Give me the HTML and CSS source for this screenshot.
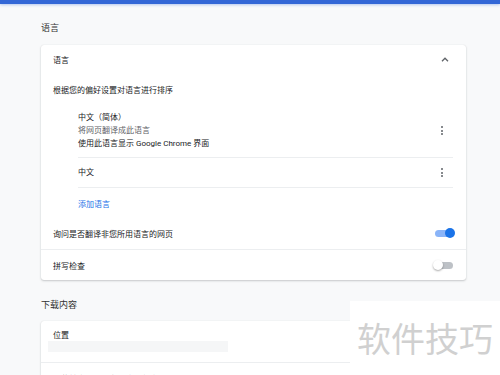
FILE: index.html
```html
<!DOCTYPE html>
<html lang="zh-CN">
<head>
<meta charset="utf-8">
<link rel="stylesheet" href="styles.css">
</head>
<body>
<div class="topbar"></div>
<main class="page">
  <h2 class="section-title">语言</h2>
  <section class="card">
    <div class="row row-head">
      <span>语言</span>
      <svg class="chev" width="8" height="5" viewBox="0 0 8 5"><path d="M1 4.2 L4 1.2 L7 4.2" fill="none" stroke="#5f6368" stroke-width="1.3"/></svg>
    </div>
    <div class="row row-sub">根据您的偏好设置对语言进行排序</div>
    <div class="lang-list">
      <div class="lang-item lang-multi">
        <div class="lang-text">
          <div class="l1">中文（简体）</div>
          <div class="l2">将网页翻译成此语言</div>
          <div class="l1">使用此语言显示 Google Chrome 界面</div>
        </div>
        <span class="dots"><i></i><i></i><i></i></span>
      </div>
      <div class="lang-item lang-single">
        <div class="lang-text"><div class="l1">中文</div></div>
        <span class="dots"><i></i><i></i><i></i></span>
      </div>
      <div class="lang-add">添加语言</div>
    </div>
    <div class="row row-toggle">
      <span>询问是否翻译非您所用语言的网页</span>
      <span class="toggle on"><span class="knob"></span></span>
    </div>
    <div class="row row-toggle bordered">
      <span>拼写检查</span>
      <span class="toggle off"><span class="knob"></span></span>
    </div>
  </section>
  <h2 class="section-title second">下载内容</h2>
  <section class="card">
    <div class="row row-loc">
      <span>位置</span>
      <div class="placeholder"></div>
    </div>
    <div class="row row-ask bordered">下载前询问每个文件的保存位置</div>
  </section>
</main>
<div class="watermark">软件技巧</div>
</body>
</html>
```
FILE: styles.css
```css
html, body {
  margin: 0;
  padding: 0;
}
*, *::before, *::after {
  box-sizing: border-box;
}
body {
  background: #f8f9fa;
  font-family: Roboto, "Noto Sans CJK SC", sans-serif;
  color: #202124;
  font-size: 8px;
  width: 500px;
  height: 375px;
  overflow: hidden;
  position: relative;
}
.topbar {
  height: 4px;
  background: #3367d6;
  box-shadow: 0 1px 3px rgba(51,103,214,0.35);
}
.page {
  display: flex;
  flex-direction: column;
  padding-left: 41px;
  width: 466px;
}
.section-title {
  margin: 0;
  font-size: 9px;
  font-weight: 400;
  color: #333;
  height: 41px;
  line-height: 14px;
  padding-top: 17px;
}
.section-title.second {
  padding-top: 18px;
}
.card {
  background: #fff;
  border-radius: 3px;
  box-shadow: 0 1px 2px rgba(60,64,67,0.25), 0 0 1px rgba(60,64,67,0.15);
  display: flex;
  flex-direction: column;
}
.row {
  display: flex;
  align-items: center;
  justify-content: space-between;
  padding: 0 13px 0 12px;
}
.row-head {
  height: 29px;
}
.chev {
  margin-right: 4px;
}
.row-sub {
  height: 30px;
}
.lang-list {
  display: flex;
  flex-direction: column;
  padding: 0 13px 0 37px;
}
.lang-item {
  display: flex;
  align-items: center;
  justify-content: space-between;
  border-bottom: 1px solid #eceef0;
}
.lang-multi {
  height: 54px;
}
.lang-single {
  height: 30px;
}
.l1, .l2 {
  line-height: 13px;
}
.l2 {
  color: #5f6368;
}
.dots {
  display: flex;
  flex-direction: column;
  gap: 1.5px;
  margin-right: 10px;
}
.dots i {
  display: block;
  width: 2px;
  height: 2px;
  border-radius: 1px;
  background: #5f6368;
}
.lang-add {
  height: 30px;
  display: flex;
  align-items: center;
  color: #1a73e8;
}
.row-toggle {
  height: 31px;
}
.bordered {
  border-top: 1px solid #eceef0;
}
.toggle {
  position: relative;
  width: 18px;
  height: 7px;
  border-radius: 4px;
}
.toggle.on {
  background: #8ab4f8;
}
.toggle.off {
  background: #bdc1c6;
}
.knob {
  position: absolute;
  top: -2px;
  width: 10px;
  height: 10px;
  border-radius: 50%;
}
.toggle.on .knob {
  right: -2px;
  background: #1a73e8;
}
.toggle.off .knob {
  left: -2px;
  background: #fff;
  box-shadow: 0 1px 2px rgba(0,0,0,0.35);
}
.row-loc {
  flex-direction: column;
  align-items: flex-start;
  justify-content: flex-start;
  height: 41px;
  padding-top: 9px;
}
.row-loc span {
  line-height: 12px;
}
.placeholder {
  margin-left: -5px;
  margin-top: -1px;
  width: 180px;
  height: 11px;
  background: #f5f6f7;
}
.row-ask {
  height: 22px;
  align-items: flex-end;
}
.watermark {
  position: absolute;
  left: 350px;
  top: 301px;
  width: 150px;
  height: 74px;
  background: #fff;
  color: #d0d0d0;
  font-family: "Noto Sans CJK SC", sans-serif;
  font-size: 34px;
  line-height: 74px;
  padding-left: 7px;
  white-space: nowrap;
}
```
